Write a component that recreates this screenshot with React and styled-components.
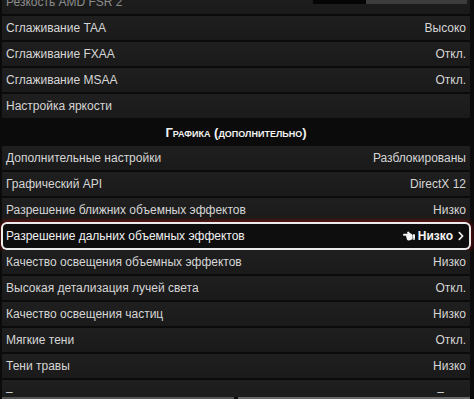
import React from 'react';
import styled, { createGlobalStyle } from 'styled-components';
import { FaHandPointLeft, FaChevronRight } from 'react-icons/fa';

const GlobalStyle = createGlobalStyle`
  html, body {
    margin: 0;
    padding: 0;
    background: #0b0b0b;
  }
  body {
    font-family: "Liberation Sans", Arial, sans-serif;
  }
`;

const rows = [
  { label: 'Сглаживание TAA', value: 'Высоко' },
  { label: 'Сглаживание FXAA', value: 'Откл.' },
  { label: 'Сглаживание MSAA', value: 'Откл.' },
  { label: 'Настройка яркости', value: '' },
  { header: 'Графика (дополнительно)' },
  { label: 'Дополнительные настройки', value: 'Разблокированы' },
  { label: 'Графический API', value: 'DirectX 12' },
  { label: 'Разрешение ближних объемных эффектов', value: 'Низко' },
  { label: 'Разрешение дальних объемных эффектов', value: 'Низко', selected: true },
  { label: 'Качество освещения объемных эффектов', value: 'Низко' },
  { label: 'Высокая детализация лучей света', value: 'Откл.' },
  { label: 'Качество освещения частиц', value: 'Низко' },
  { label: 'Мягкие тени', value: 'Откл.' },
  { label: 'Тени травы', value: 'Низко' },
  { label: '–', value: '–', inset: true },
];

export default function App() {
  return (
    <>
      <GlobalStyle />
      <Screen>
        <List>
          <Row>
            <Label $dim>Резкость AMD FSR 2</Label>
            <Slider>
              <SliderFill />
              <SliderRest />
            </Slider>
          </Row>
          {rows.map((r, i) =>
            r.header ? (
              <Header key={i}>{r.header}</Header>
            ) : r.selected ? (
              <SelectedRow key={i}>
                <Label>{r.label}</Label>
                <Picker>
                  <FaHandPointLeft size={12} />
                  <Value>{r.value}</Value>
                  <FaChevronRight size={10} />
                </Picker>
              </SelectedRow>
            ) : (
              <Row key={i}>
                <Label>{r.label}</Label>
                <Value $inset={r.inset}>{r.value}</Value>
              </Row>
            )
          )}
        </List>
        <Footer>
          <FooterPanel />
          <FooterPanel $light />
        </Footer>
      </Screen>
    </>
  );
}

const Screen = styled.div`
  width: 474px;
  height: 399px;
  overflow: hidden;
  display: grid;
  grid-template-rows: 397px 1fr;
`;

const List = styled.div`
  display: flex;
  flex-direction: column;
  gap: 2px;
  margin-top: -10px;
  padding: 0 4px 0 2px;
  overflow: hidden;
`;

const Row = styled.div`
  flex: 0 0 24px;
  display: flex;
  align-items: center;
  justify-content: space-between;
  padding: 0 4px;
  background: linear-gradient(180deg, #1f1f1f 0%, #1a1a1a 100%);
  color: #d6d6d6;
  font-size: 12px;
`;

const SelectedRow = styled(Row)`
  margin: 0 1px;
  padding: 0 3px;
  background: #0e0e0e;
  border-radius: 4px;
  box-shadow: 0 0 0 2px #ececec, 0 0 5px 3px rgba(150, 16, 16, 0.75);
  color: #f0f0f0;
`;

const Header = styled.div`
  flex: 0 0 24px;
  display: flex;
  align-items: center;
  justify-content: center;
  color: #f2f2f2;
  font-size: 13px;
  font-weight: bold;
  font-variant: small-caps;
`;

const Label = styled.span`
  color: ${(p) => (p.$dim ? '#8c8c8c' : 'inherit')};
  white-space: nowrap;
`;

const Value = styled.span`
  white-space: nowrap;
  margin-right: ${(p) => (p.$inset ? '22px' : '0')};
`;

const Picker = styled.div`
  display: flex;
  align-items: center;
  gap: 3px;
  color: #f4f4f4;
  font-weight: bold;
`;

const Slider = styled.div`
  display: flex;
  width: 154px;
  height: 6px;
  margin-top: -2px;
  margin-right: -1px;
`;

const SliderFill = styled.div`
  flex: 0 0 53px;
  background: #050505;
`;

const SliderRest = styled.div`
  flex: 1;
  background: #3c3c3c;
`;

const Footer = styled.div`
  display: flex;
  gap: 4px;
  padding: 0 4px 0 2px;
`;

const FooterPanel = styled.div`
  flex: 1;
  background: ${(p) => (p.$light ? '#6a6a6a' : '#555')};
`;
